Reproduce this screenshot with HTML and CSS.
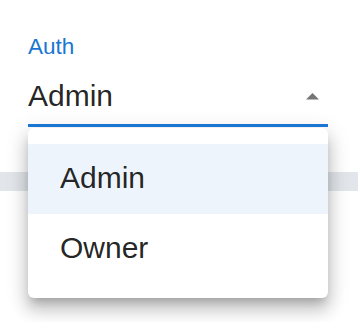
FILE: index.html
```html
<!DOCTYPE html>
<html lang="en">
<head>
    <meta charset="UTF-8">
    <meta name="viewport" content="width=device-width, initial-scale=1.0">
    <title>Auth Select</title>
    <link rel="stylesheet" href="styles.css">
</head>
<body>
    <div class="page">
        <!-- Select field -->
        <div class="field">
            <label class="field-label">Auth</label>
            <div class="select-row">
                <span class="select-value">Admin</span>
                <svg class="select-arrow" width="13" height="7" viewBox="0 0 13 7">
                    <path d="M0 6.5 L6.5 0 L13 6.5 Z" fill="#757575"/>
                </svg>
            </div>
        </div>

        <div class="band"></div>

        <!-- Open menu -->
        <ul class="menu">
            <li class="menu-item selected">Admin</li>
            <li class="menu-item">Owner</li>
        </ul>
    </div>
</body>
</html>
```

FILE: styles.css
```css
html, body {
    margin: 0;
    padding: 0;
    background: #ffffff;
}
body {
    font-family: "Liberation Sans", Arial, sans-serif;
    color: rgba(0, 0, 0, 0.87);
}
.page {
    position: relative;
    width: 358px;
    height: 322px;
    overflow: hidden;
}
.field {
    position: relative;
    z-index: 3;
    width: 300px;
    margin-left: 28px;
    padding-top: 31px;
}
.field-label {
    display: block;
    font-size: 22.5px;
    line-height: 32px;
    color: #1976d2;
}
.select-row {
    display: flex;
    justify-content: space-between;
    align-items: flex-start;
    margin-top: 15px;
    padding-bottom: 10px;
    border-bottom: 3px solid #1976d2;
}
.select-value {
    font-size: 30px;
    line-height: 36px;
}
.select-arrow {
    display: block;
    margin-top: 15px;
    margin-right: 9px;
}
.band {
    margin-top: 45px;
    height: 19px;
    background: #e2e6ea;
}
.menu {
    position: absolute;
    z-index: 2;
    top: 128px;
    left: 28px;
    width: 300px;
    margin: 0;
    padding: 16px 0 14px;
    list-style: none;
    background: #ffffff;
    border-radius: 6px;
    box-shadow: 0 7px 8px -4px rgba(0, 0, 0, 0.2),
                0 12px 15px 2px rgba(0, 0, 0, 0.14),
                0 5px 21px 3px rgba(0, 0, 0, 0.12);
}
.menu-item {
    height: 68px;
    padding: 0 0 2px 32px;
    font-size: 30px;
    line-height: 68px;
}
.menu-item.selected {
    background: #edf4fb;
}
```
